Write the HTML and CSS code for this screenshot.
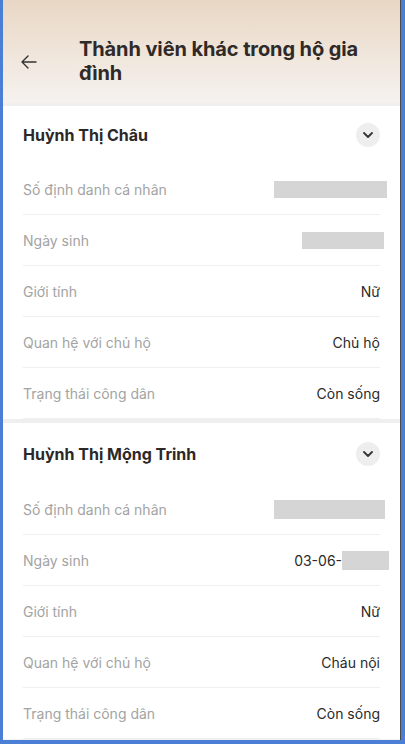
FILE: index.html
```html
<!DOCTYPE html>
<html lang="vi">
<head>
<meta charset="utf-8">
<link rel="stylesheet" href="styles.css">
</head>
<body>
<div class="frame">
  <header class="top">
    <span class="back">
      <svg width="16" height="14" viewBox="0 0 16 14"><path d="M15 7H1.5M7 1L1 7l6 6" fill="none" stroke="#333" stroke-width="1.4" stroke-linecap="round" stroke-linejoin="round"/></svg>
    </span>
    <h1 class="title">Thành viên khác trong hộ gia đình</h1>
  </header>
  <div class="strip"></div>
  <section class="card">
    <div class="card-head">
      <span class="name">Huỳnh Thị Châu</span>
      <span class="chev"><svg width="10" height="6" viewBox="0 0 10 6"><path d="M1 1l4 4 4-4" fill="none" stroke="#333" stroke-width="1.8" stroke-linecap="round" stroke-linejoin="round"/></svg></span>
    </div>
    <div class="row"><span class="label">Số định danh cá nhân</span><span class="mask mask-id"></span></div>
    <div class="row"><span class="label">Ngày sinh</span><span class="mask mask-dob"></span></div>
    <div class="row"><span class="label">Giới tính</span><span class="value">Nữ</span></div>
    <div class="row"><span class="label">Quan hệ với chủ hộ</span><span class="value">Chủ hộ</span></div>
    <div class="row"><span class="label">Trạng thái công dân</span><span class="value">Còn sống</span></div>
  </section>
  <div class="gap"></div>
  <section class="card">
    <div class="card-head second">
      <span class="name">Huỳnh Thị Mộng Trinh</span>
      <span class="chev"><svg width="10" height="6" viewBox="0 0 10 6"><path d="M1 1l4 4 4-4" fill="none" stroke="#333" stroke-width="1.8" stroke-linecap="round" stroke-linejoin="round"/></svg></span>
    </div>
    <div class="row"><span class="label">Số định danh cá nhân</span><span class="mask mask-id2"></span></div>
    <div class="row"><span class="label">Ngày sinh</span><span class="value date">03-06-<span class="mask mask-year"></span></span></div>
    <div class="row"><span class="label">Giới tính</span><span class="value">Nữ</span></div>
    <div class="row"><span class="label">Quan hệ với chủ hộ</span><span class="value">Cháu nội</span></div>
    <div class="row"><span class="label">Trạng thái công dân</span><span class="value">Còn sống</span></div>
  </section>
  <div class="bottom"></div>
</div>
</body>
</html>
```
FILE: styles.css
```css
* { box-sizing: border-box; }
html, body { margin: 0; padding: 0; }
body {
  width: 405px;
  height: 744px;
  overflow: hidden;
  background: #4b7fd5;
  font-family: Inter, "Noto Sans", sans-serif;
  padding: 0 4px 4px 3px;
}
.frame {
  height: 740px;
  background: #fff;
  border-right: 1px solid #4a4a4a;
  overflow: hidden;
  display: flex;
  flex-direction: column;
}
.top {
  height: 103px;
  background: linear-gradient(180deg, #e9d7c5 0%, #f0e6dc 55%, #f5f2ef 100%);
  display: flex;
  align-items: flex-start;
  padding: 38px 20px 0 18px;
}
.back {
  width: 58px;
  height: 47px;
  display: flex;
  align-items: center;
  flex-shrink: 0;
}
.title {
  margin: 0;
  font-size: 20px;
  line-height: 23.5px;
  font-weight: 700;
  color: #2f2a28;
  letter-spacing: -0.1px;
}
.strip { height: 3px; background: #f0efed; }
.card { padding: 0 20px; }
.card-head {
  height: 58px;
  display: flex;
  align-items: center;
  justify-content: space-between;
}
.card-head.second { height: 61px; }
.name {
  font-size: 16px;
  font-weight: 700;
  color: #2c2827;
}
.chev {
  width: 24px;
  height: 24px;
  border-radius: 50%;
  background: #eeeeee;
  display: flex;
  align-items: center;
  justify-content: center;
}
.row {
  height: 51px;
  border-bottom: 1px solid #efefef;
  display: flex;
  align-items: center;
  justify-content: space-between;
  font-size: 14px;
}
.label { color: #a3a3a3; }
.value { color: #2a2a2a; display: flex; align-items: center; }
.mask { display: inline-block; background: #d5d5d5; }
.mask-id { width: 113px; height: 17px; margin-right: -7px; }
.mask-dob { width: 82px; height: 17px; margin-right: -4px; }
.mask-id2 { width: 111px; height: 19px; margin-right: -5px; }
.date { margin-right: -9px; }
.mask-year { width: 47px; height: 19px; }
.gap { height: 4px; background: #efefef; }
.bottom { flex: 1; background: #f2f2f2; }
```
